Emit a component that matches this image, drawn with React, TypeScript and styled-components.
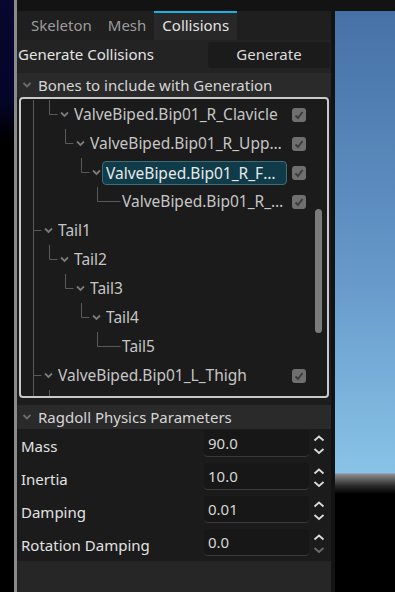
import styled, { createGlobalStyle } from "styled-components";

type Bone = {
    name: string;
    level: number;
    leaf?: boolean;
    check?: boolean;
    selected?: boolean;
};

const bones: Bone[] = [
    { name: "ValveBiped.Bip01_R_Clavicle", level: 2, check: true },
    { name: "ValveBiped.Bip01_R_UpperArm", level: 3, check: true },
    { name: "ValveBiped.Bip01_R_Forearm", level: 4, check: true, selected: true },
    { name: "ValveBiped.Bip01_R_Hand", level: 5, leaf: true, check: true },
    { name: "Tail1", level: 1 },
    { name: "Tail2", level: 2 },
    { name: "Tail3", level: 3 },
    { name: "Tail4", level: 4 },
    { name: "Tail5", level: 5, leaf: true },
    { name: "ValveBiped.Bip01_L_Thigh", level: 1, check: true },
    // next row is scrolled just past the bottom edge, only its line shows
    { name: "", level: 2, check: true },
];

const params = [
    { label: "Mass", value: "90.0", canDown: true },
    { label: "Inertia", value: "10.0", canDown: true },
    { label: "Damping", value: "0.01", canDown: true },
    { label: "Rotation Damping", value: "0.0", canDown: false },
];

const LINE = "#5a5a5a";

// connector lines + expand chevron for one tree row
const Guides = ({ level, leaf }: { level: number; leaf?: boolean }) => {
    const w = 37 + 16 * (level - 1);
    const x = 12 + 16 * (level - 1) + 0.5;
    const mid = 14.5;
    return (
        <svg width={w} height={29} style={{ flex: "none" }}>
            <line x1={12.5} y1={0} x2={12.5} y2={29} stroke={LINE} strokeWidth={1} />
            {level > 1 && <line x1={x} y1={0} x2={x} y2={mid} stroke={LINE} strokeWidth={1} />}
            <line x1={x} y1={mid} x2={leaf ? x + 23 : x + 8} y2={mid} stroke={LINE} strokeWidth={1} />
            {!leaf && (
                <polyline
                    points={`${x + 11.5},${mid - 2} ${x + 15},${mid + 1.5} ${x + 18.5},${mid - 2}`}
                    fill="none"
                    stroke="#7a7a7a"
                    strokeWidth={1.8}
                />
            )}
        </svg>
    );
};

const Chevron = () => (
    <svg width={10} height={8} style={{ flex: "none" }}>
        <polyline points="1.5,2 5,5.5 8.5,2" fill="none" stroke="#6c6c6c" strokeWidth={1.8} />
    </svg>
);

const Spinner = ({ canDown }: { canDown: boolean }) => (
    <svg width={12} height={22} style={{ flex: "none" }}>
        <polyline points="1.5,5.5 6,1.5 10.5,5.5" fill="none" stroke="#dadada" strokeWidth={1.8} />
        <polyline
            points="1.5,14 6,18 10.5,14"
            fill="none"
            stroke={canDown ? "#dadada" : "#6a6a6a"}
            strokeWidth={1.8}
        />
    </svg>
);

const Tick = () => (
    <svg width={14} height={14}>
        <polyline points="3.5,7.5 6,10 10.5,4" fill="none" stroke="#3c3c3c" strokeWidth={2} />
    </svg>
);

const App = () => {
    return (
        <>
            <GlobalStyle />
            <Screen>
                <SceneStrip />
                <Splitter />
                <Main>
                    <TopBar />
                    <Workspace>
                        <Panel>
                            <Tabs>
                                <Tab>Skeleton</Tab>
                                <Tab>Mesh</Tab>
                                <Tab $active>Collisions</Tab>
                            </Tabs>
                            <ActionRow>
                                <ActionLabel>Generate Collisions</ActionLabel>
                                <Button>Generate</Button>
                            </ActionRow>
                            <SectionHeader>
                                <Chevron />
                                <span>Bones to include with Generation</span>
                            </SectionHeader>
                            <TreeWrap>
                                <TreeBox>
                                    {bones.map((b, i) => (
                                        <TreeRow key={i}>
                                            <Guides level={b.level} leaf={b.leaf} />
                                            {b.name && (
                                                <BoneLabel $selected={b.selected}>{b.name}</BoneLabel>
                                            )}
                                            {b.check && (
                                                <Check>
                                                    <Tick />
                                                </Check>
                                            )}
                                        </TreeRow>
                                    ))}
                                    <ScrollThumb />
                                </TreeBox>
                            </TreeWrap>
                            <SectionHeader>
                                <Chevron />
                                <span>Ragdoll Physics Parameters</span>
                            </SectionHeader>
                            <Params>
                                {params.map((p) => (
                                    <ParamRow key={p.label}>
                                        <ParamLabel>{p.label}</ParamLabel>
                                        <NumberInput defaultValue={p.value} />
                                        <Spinner canDown={p.canDown} />
                                    </ParamRow>
                                ))}
                            </Params>
                            <Footer />
                        </Panel>
                        <PanelGap />
                        <Viewport />
                    </Workspace>
                </Main>
            </Screen>
        </>
    );
};

export default App;

const GlobalStyle = createGlobalStyle`
    * {
        box-sizing: border-box;
    }
    body {
        margin: 0;
        background: #000;
        font-family: "Noto Sans", "Open Sans", sans-serif;
    }
`;

const Screen = styled.div`
    width: 395px;
    height: 592px;
    display: flex;
    flex-direction: row;
    overflow: hidden;
`;
const SceneStrip = styled.div`
    width: 14px;
    flex: none;
    background: linear-gradient(#07072f 0, #05052a 100px, #000 140px);
`;
const Splitter = styled.div`
    width: 3px;
    flex: none;
    background-color: #8a8a8a;
`;
const Main = styled.div`
    flex: 1;
    display: flex;
    flex-direction: column;
    min-width: 0;
`;
const TopBar = styled.div`
    height: 11px;
    flex: none;
    background-color: #131313;
`;
const Workspace = styled.div`
    flex: 1;
    display: flex;
    flex-direction: row;
    min-height: 0;
`;
const Panel = styled.div`
    width: 314px;
    flex: none;
    display: flex;
    flex-direction: column;
    background-color: #1c1c1c;
`;
const PanelGap = styled.div`
    width: 4px;
    flex: none;
    background-color: #131313;
`;
const Viewport = styled.div`
    flex: 1;
    background: linear-gradient(
        to bottom,
        #4671a6 0,
        #6496c8 250px,
        #88c3e7 462px,
        #8c8c8c 463px,
        #2a2a2a 475px,
        #000 483px
    );
`;

/* tabs */
const Tabs = styled.div`
    height: 29px;
    flex: none;
    display: flex;
    flex-direction: row;
    padding-left: 6px;
    background-color: #1f1f1f;
`;
const Tab = styled.div<{ $active?: boolean }>`
    display: flex;
    align-items: center;
    padding: 0 8px 3px;
    font-size: 15px;
    color: ${(p) => (p.$active ? "#e4e4e4" : "#9c9c9c")};
    background-color: ${(p) => (p.$active ? "#282828" : "transparent")};
    border-top: 2px solid ${(p) => (p.$active ? "#19b2e6" : "transparent")};
`;

const ActionRow = styled.div`
    height: 33px;
    flex: none;
    display: flex;
    flex-direction: row;
    align-items: flex-start;
    padding: 2px 1px 0;
    background-color: #232323;
`;
const ActionLabel = styled.div`
    flex: 1;
    line-height: 24px;
    font-size: 15px;
    color: #e4e4e4;
`;
const Button = styled.button`
    width: 122px;
    height: 26px;
    padding: 0 0 2px;
    border: none;
    border-radius: 3px;
    background-color: #1b1b1b;
    color: #dcdcdc;
    font-family: inherit;
    font-size: 15px;
`;

const SectionHeader = styled.div`
    height: 24px;
    flex: none;
    display: flex;
    flex-direction: row;
    align-items: center;
    gap: 6px;
    padding-left: 5px;
    background-color: #2a2a2a;
    font-size: 15px;
    color: #d6d6d6;
`;

/* tree */
const TreeWrap = styled.div`
    flex: none;
    padding: 0 2px 7px;
    background-color: #1d1d1d;
`;
const TreeBox = styled.div`
    position: relative;
    height: 301px;
    padding-top: 1px;
    border: 2px solid #c9c9c9;
    border-radius: 4px;
    background-color: #1b1b1b;
    overflow: hidden;
`;
const TreeRow = styled.div`
    height: 29px;
    display: flex;
    flex-direction: row;
    align-items: center;
    padding-right: 21px;
`;
const BoneLabel = styled.div<{ $selected?: boolean }>`
    flex: 0 1 auto;
    min-width: 0;
    height: 24px;
    line-height: 22px;
    margin-right: 5px;
    margin-left: ${(p) => (p.$selected ? "-4px" : "0")};
    padding: 0 ${(p) => (p.$selected ? "3px" : "0")};
    border: ${(p) => (p.$selected ? "1px solid #3f6c79" : "none")};
    border-radius: 4px;
    background-color: ${(p) => (p.$selected ? "#0f3c48" : "transparent")};
    color: ${(p) => (p.$selected ? "#e8e8e8" : "#c6c6c6")};
    font-size: 15.5px;
    white-space: nowrap;
    overflow: hidden;
    text-overflow: ellipsis;
`;
const Check = styled.div`
    margin-left: auto;
    width: 14px;
    height: 14px;
    flex: none;
    border-radius: 3px;
    background-color: #6f6f6f;
    display: flex;
`;
const ScrollThumb = styled.div`
    position: absolute;
    right: 5px;
    top: 110px;
    width: 7px;
    height: 124px;
    border-radius: 4px;
    background-color: #7b7b7b;
`;

/* params */
const Params = styled.div`
    flex: none;
    display: flex;
    flex-direction: column;
    background-color: #1b1b1b;
`;
const ParamRow = styled.div`
    height: 33px;
    display: flex;
    flex-direction: row;
    align-items: center;
    padding-left: 4px;
`;
const ParamLabel = styled.div`
    width: 183px;
    font-size: 15px;
    color: #e2e2e2;
`;
const NumberInput = styled.input`
    width: 105px;
    height: 27px;
    margin-top: -4px;
    margin-right: 4px;
    padding: 0 4px;
    border: none;
    border-bottom: 1px solid #3a3a3a;
    border-radius: 4px;
    background-color: #171717;
    color: #d6d6d6;
    font-family: inherit;
    font-size: 15px;
    outline: none;
`;
const Footer = styled.div`
    flex: 1;
    background-color: #262626;
`;
